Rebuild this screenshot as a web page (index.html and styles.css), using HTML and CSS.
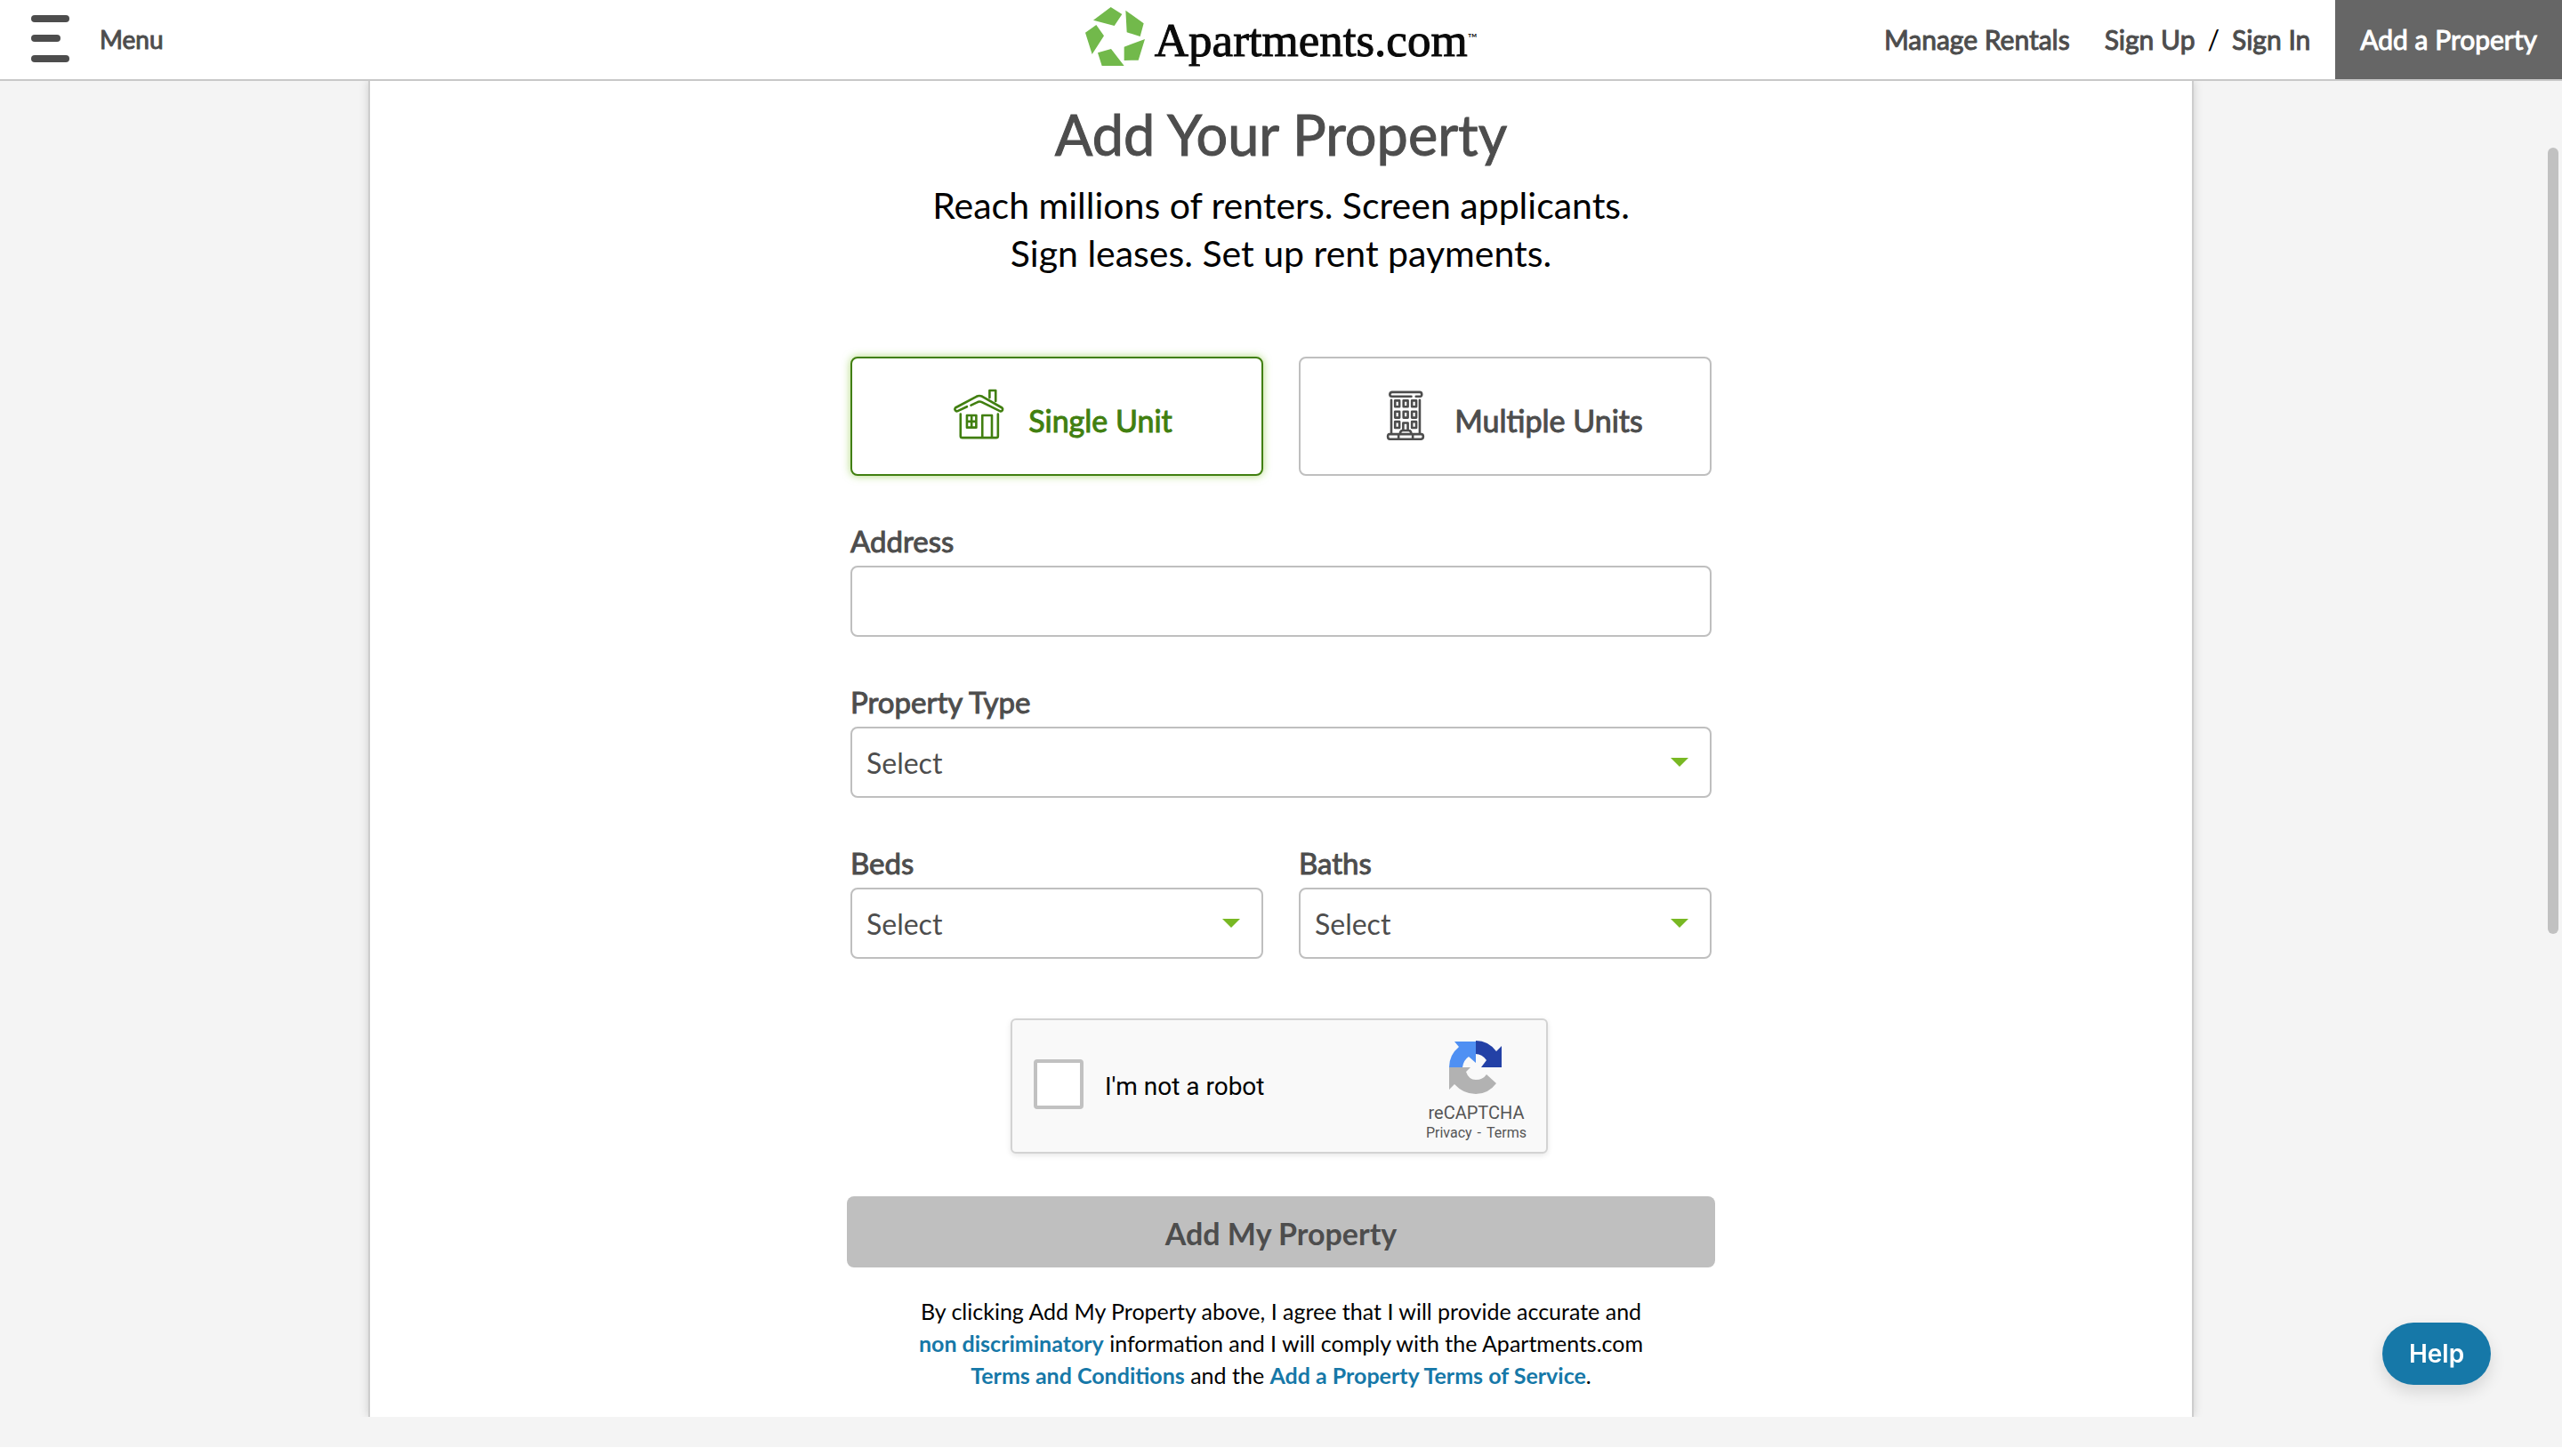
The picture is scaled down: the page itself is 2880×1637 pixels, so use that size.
FILE: index.html
```html
<!DOCTYPE html>
<html lang="en">
<head>
  <meta charset="utf-8">
  <meta name="viewport" content="width=device-width, initial-scale=1">
  <title>Add Your Property - Apartments.com</title>
  <link rel="stylesheet" href="styles.css">
</head>
<body>
  <header class="site-header">
    <button class="menu-button" type="button">
      <svg class="menu-icon" viewBox="0 0 43 54" aria-hidden="true">
        <rect width="43" height="8" rx="4"/>
        <rect y="22" width="33" height="8" rx="4"/>
        <rect y="45" width="43" height="8" rx="4"/>
      </svg>
      Menu
    </button>

    <a class="logo" href="#">
      <svg class="logo-mark" viewBox="60 20 204 204" aria-hidden="true">
        <path d="M87 67 146 23 184 47 158 86ZM196 34 257 78 245 122 200 108ZM261 131 239 202 191 203V157ZM102 177 147 164 191 221H116ZM60 109 97 83 123 120 83 182Z"/>
      </svg>
      <span class="logo-name">Apartments.com</span><span class="logo-tm">™</span>
    </a>

    <nav class="account-nav">
      <a class="nav-link nav-manage" href="#">Manage Rentals</a>
      <a class="nav-link" href="#">Sign Up</a>
      <span class="nav-slash">/</span>
      <a class="nav-link" href="#">Sign In</a>
      <a class="nav-add" href="#">Add a Property</a>
    </nav>
  </header>

  <main class="page">
    <div class="card">
      <h1 class="title">Add Your Property</h1>
      <p class="subtitle">Reach millions of renters. Screen applicants.<br>Sign leases. Set up rent payments.</p>

      <form class="form">
        <div class="pair">
          <button class="unit unit-active" type="button" aria-pressed="true">
            <svg class="unit-icon" viewBox="60 48 184 180" aria-hidden="true">
              <path d="M112 111 80 126A7 7 0 0 1 72 115L145 76Q155 71 165 76L233 115A7 7 0 0 1 227 127L165 96Q155 91 147 96L126 106M190 80V55H211V92M90 137V212Q90 218 96 218H213Q219 218 219 212V137M165 215V141H198V215M112 141H144V183H112ZM128 141V183M112 162H144"/>
            </svg>
            <span class="unit-name">Single Unit</span>
          </button>
          <button class="unit" type="button" aria-pressed="false">
            <svg class="unit-icon" viewBox="29 48 184 180" aria-hidden="true">
              <path d="M144 76H77Q70 76 70 69T77 61H173Q180 61 180 69T173 76H160M75 88V206M173 88V206M88 90H103V111H88ZM117 90H132V111H117ZM146 90H161V111H146ZM88 128H103V149H88ZM117 128H132V149H117ZM146 128H161V149H146ZM88 163H103V184H88ZM146 163H161V184H146ZM116 190V167H132V190M105 205Q106 193 114 193H135Q143 193 144 205M70 206H178Q185 206 185 214T178 223H70Q63 223 63 214T70 206ZM100 206V223M149 206V223"/>
            </svg>
            <span class="unit-name">Multiple Units</span>
          </button>
        </div>

        <div class="field">
          <label class="label" for="address">Address</label>
          <input class="control" id="address" type="text">
        </div>

        <div class="field">
          <label class="label" for="type">Property Type</label>
          <div class="select">
            <select class="control" id="type"><option>Select</option></select>
          </div>
        </div>

        <div class="pair">
          <div class="field">
            <label class="label" for="beds">Beds</label>
            <div class="select">
              <select class="control" id="beds"><option>Select</option></select>
            </div>
          </div>
          <div class="field">
            <label class="label" for="baths">Baths</label>
            <div class="select">
              <select class="control" id="baths"><option>Select</option></select>
            </div>
          </div>
        </div>

        <div class="captcha">
          <input class="captcha-box" id="robot" type="checkbox">
          <label class="captcha-label" for="robot">I'm not a robot</label>
          <div class="captcha-brand">
            <svg class="captcha-logo" viewBox="0 0 60 60" aria-hidden="true">
              <path fill="#b2b2b2" d="M0 30H24L19 35Q22 44 30 44T42 38L53 48Q44 60 30 60T6 49L0 55Z"/>
              <path fill="#4f90f3" d="M6 1H30V25L22 18Q16 22 15 30H0Q0 16 11 7Z"/>
              <path fill="#2341a6" d="M30 0Q44 0 53 12L59 6V30H36L42 22Q37 15 30 15Z"/>
            </svg>
            <span class="captcha-name">reCAPTCHA</span>
            <span class="captcha-links"><a href="#">Privacy</a><span>-</span><a href="#">Terms</a></span>
          </div>
        </div>

        <button class="submit" type="submit" disabled>Add My Property</button>
      </form>

      <p class="terms">By clicking Add My Property above, I agree that I will provide accurate and<br>
        <a href="#">non discriminatory</a> information and I will comply with the Apartments.com<br>
        <a href="#">Terms and Conditions</a> and the <a href="#">Add a Property Terms of Service</a>.</p>
    </div>
  </main>

  <button class="help" type="button">Help</button>
  <div class="scroll-thumb"></div>
</body>
</html>
```
FILE: styles.css
```css
* { box-sizing: border-box; }

body {
  margin: 0;
  background: #fff;
  color: #000;
  font-family: Lato, "Liberation Sans", sans-serif;
  font-size: 32px;
}

button, input, select { font: inherit; color: inherit; }
a { text-decoration: none; }

/* Header */
.site-header {
  display: grid;
  grid-template-columns: 1fr auto 1fr;
  align-items: center;
  height: 91px;
  border-bottom: 2px solid #c8c8c8;
  background: #fff;
}

.menu-button {
  display: flex;
  align-items: center;
  justify-self: start;
  gap: 34px;
  padding: 0 0 2px 35px;
  border: 0;
  background: none;
  color: #4d4d4d;
  font-size: 28px;
}

.menu-icon { width: 43px; height: 54px; fill: #4d4d4d; }

/* Medium weight: a hairline outline over the regular face */
.menu-button, .nav-link, .nav-add, .title, .unit-name, .label {
  -webkit-text-stroke: 1px currentColor;
}

.logo { display: flex; align-items: center; color: #0a0a0a; }
.logo-mark { width: 68px; height: 68px; margin: 0 10px 8px 0; fill: #72b94b; }

.logo-name {
  font: 53px/60px "Liberation Serif", serif;
  -webkit-text-stroke: 1px #0a0a0a;
}

.logo-tm { align-self: flex-start; padding-top: 26px; font-size: 14px; line-height: 20px; }

.account-nav {
  display: flex;
  align-items: center;
  justify-self: end;
  gap: 14px;
  height: 100%;
  font-size: 30px;
  line-height: 36px;
}

.nav-link, .nav-slash { padding-bottom: 2px; }
.nav-link { color: #4d4d4d; }
.nav-manage { margin-right: 25px; }

.nav-add {
  display: flex;
  align-items: center;
  height: 100%;
  margin-left: 14px;
  padding: 0 28px 2px;
  background: #666;
  color: #fff;
}

/* Page and card */
.page { padding-bottom: 34px; background: #f4f4f4; }

.card {
  max-width: 2052px;
  margin: 0 auto;
  padding: 25px 40px 29px;
  border: solid #cdcdcd;
  border-width: 0 2px;
  background: #fff;
  box-shadow: 0 0 10px rgba(0, 0, 0, .16);
  clip-path: inset(0 -12px);
  text-align: center;
}

.title { margin: 0; color: #4d4d4d; font-size: 63px; font-weight: 400; line-height: 70px; }
.subtitle { margin: 18px 0 89px; font-size: 41px; line-height: 54px; }

/* Form */
.form { max-width: 968px; margin: 0 auto; }
.pair { display: grid; grid-template-columns: 1fr 1fr; gap: 40px; }

.unit {
  display: flex;
  align-items: center;
  justify-content: center;
  gap: 26px;
  height: 134px;
  padding: 0 0 0 12px;
  border: 2px solid #bfbfbf;
  border-radius: 8px;
  background: #fff;
  color: #4d4d4d;
  font-size: 34px;
}

.unit-active {
  border-color: #417f10;
  color: #417f10;
  box-shadow: 0 0 10px rgba(120, 190, 32, .6);
}

.unit-icon {
  width: 60px;
  height: 60px;
  margin-bottom: 4px;
  fill: none;
  stroke: currentColor;
  stroke-width: 8;
  stroke-linecap: round;
  stroke-linejoin: round;
}

.unit-name { padding-top: 8px; }

.field { margin-top: 53px; text-align: left; }

.label {
  display: block;
  margin-bottom: 8px;
  color: #4d4d4d;
  font-size: 33px;
  line-height: 40px;
}

.control {
  display: block;
  width: 100%;
  height: 80px;
  padding: 0 16px;
  border: 2px solid #bfbfbf;
  border-radius: 8px;
  background: #fff;
  color: #4d4d4d;
  appearance: none;
}

.select { position: relative; }

.select::after {
  content: "";
  position: absolute;
  top: 35px;
  right: 26px;
  border: solid transparent;
  border-width: 10px 10px 0;
  border-top-color: #78b823;
  pointer-events: none;
}

/* Captcha */
.captcha {
  display: flex;
  align-items: center;
  width: 604px;
  height: 152px;
  margin: 67px auto 48px 180px;
  padding: 0 22px 0 24px;
  border: 2px solid #d3d3d3;
  border-radius: 6px;
  background: #f9f9f9;
  box-shadow: 0 2px 6px rgba(0, 0, 0, .1);
  font-family: Roboto, sans-serif;
}

.captcha-box {
  width: 56px;
  height: 56px;
  margin: 0 24px 4px 0;
  border: 4px solid #c1c1c1;
  border-radius: 4px;
  background: #fff;
  appearance: none;
}

.captcha-label { font-size: 28px; }

.captcha-brand {
  display: flex;
  flex-direction: column;
  align-items: center;
  margin-left: auto;
  padding-top: 12px;
  color: #555;
}

.captcha-logo { width: 60px; height: 60px; margin-bottom: 8px; }
.captcha-name { font-size: 20px; line-height: 26px; }
.captcha-links { display: flex; gap: 6px; font-size: 16px; line-height: 20px; }
.captcha-links a { color: inherit; }

.submit {
  display: block;
  width: calc(100% + 8px);
  height: 80px;
  margin: 0 -4px;
  padding: 2px 0 0;
  border: 0;
  border-radius: 8px;
  background: #bfbfbf;
  color: #4d4d4d;
  font-size: 34px;
  font-weight: 700;
}

.terms { margin: 31px 0 0; font-size: 25px; line-height: 36px; }
.terms a { color: #1678a8; font-weight: 700; }

/* Floating help button and scroll indicator */
.help {
  position: fixed;
  right: 80px;
  bottom: 80px;
  width: 122px;
  height: 70px;
  border: 0;
  border-radius: 35px;
  background: #1678a8;
  color: #fff;
  box-shadow: 0 8px 18px rgba(0, 0, 0, .12);
  font: 600 28px Inter, sans-serif;
}

.scroll-thumb {
  position: fixed;
  top: 166px;
  right: 4px;
  width: 12px;
  height: 54%;
  border-radius: 6px;
  background: #c1c1c1;
}
```
